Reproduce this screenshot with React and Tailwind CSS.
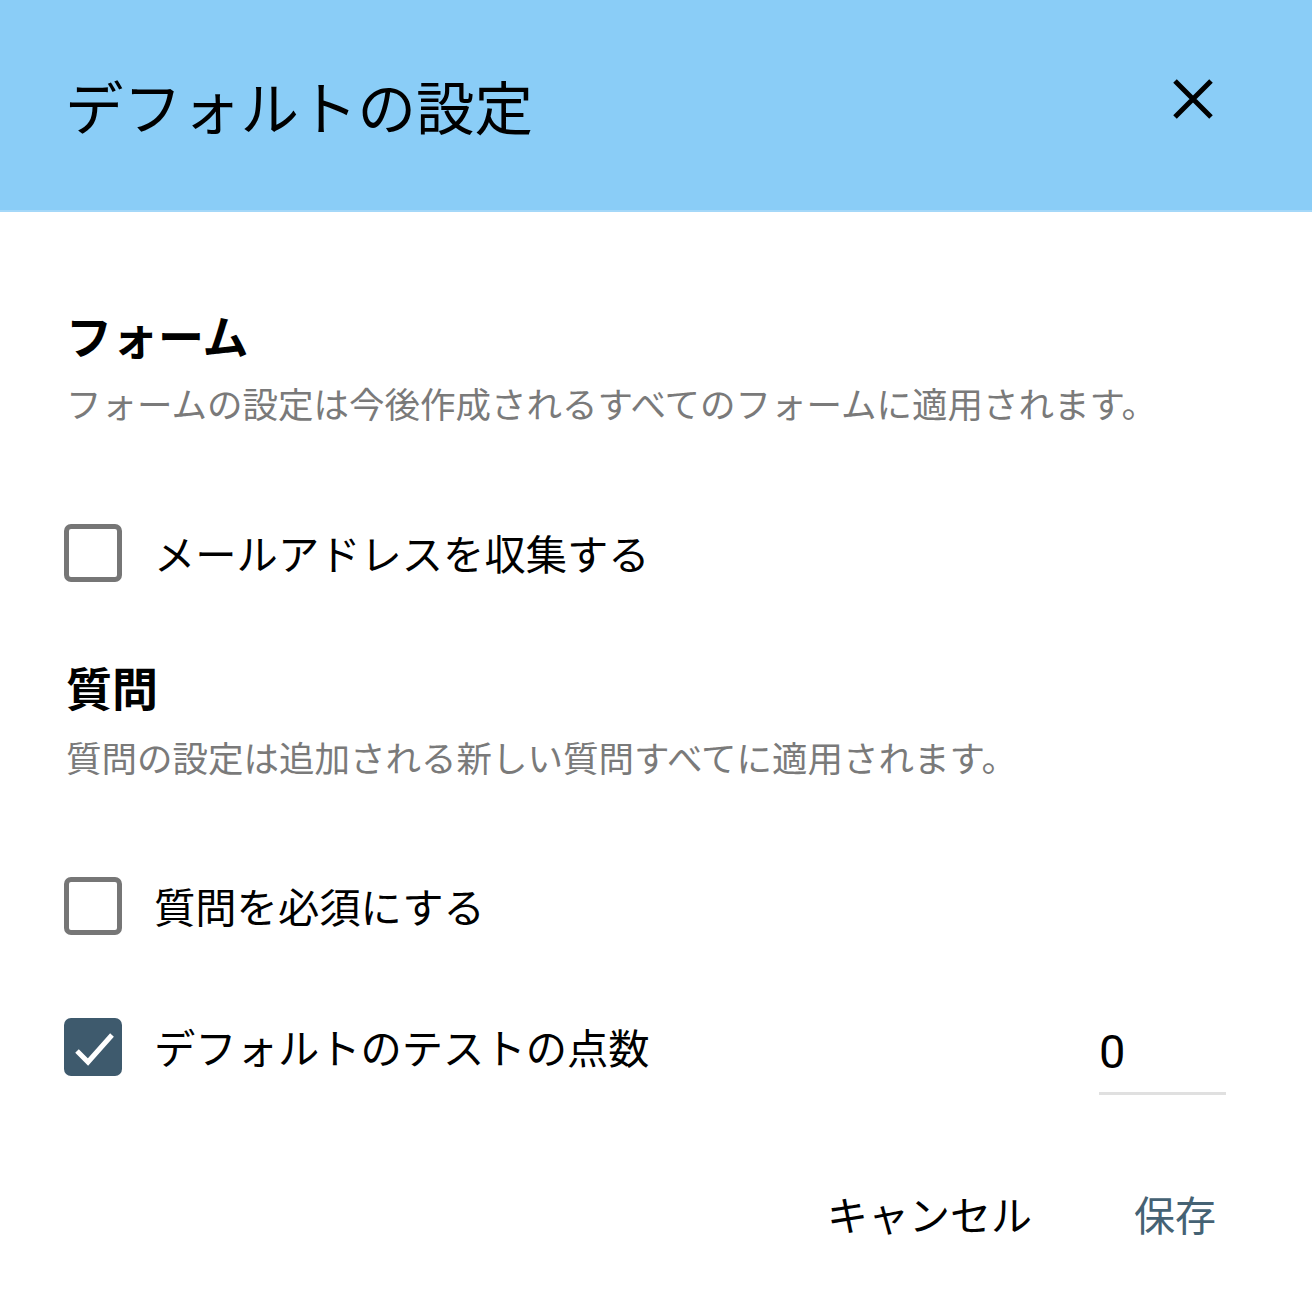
function Box({ checked }) {
  if (checked) {
    return (
      <span className="flex h-[58px] w-[58px] shrink-0 items-center justify-center rounded-[7px] bg-[#3e5a6d]">
        <svg viewBox="0 0 58 58" className="h-[58px] w-[58px]">
          <path d="M13 33 L24 44 L48 17" fill="none" stroke="white" strokeWidth="5" />
        </svg>
      </span>
    )
  }
  return <span className="h-[58px] w-[58px] shrink-0 rounded-[7px] border-[5px] border-[#767676] bg-white" />
}

export default function App() {
  return (
    <div
      className="min-h-[1314px] w-full bg-white text-black"
      style={{ fontFamily: '"Noto Sans CJK JP", "Noto Sans", sans-serif' }}
    >
      {/* Header */}
      <div className="flex h-[212px] items-center justify-between border-b-2 border-[#a4d8f9] bg-[#8acdf7] pl-[65px] pr-[99px]">
        <h1 className="text-[58.5px] leading-none font-normal">デフォルトの設定</h1>
        <svg viewBox="0 0 40 40" className="h-[40px] w-[40px] -translate-y-[6px]">
          <path d="M2 2 L38 38 M38 2 L2 38" stroke="black" strokeWidth="5" fill="none" />
        </svg>
      </div>

      <div className="px-[64px]">
        {/* Form section */}
        <h2 className="mt-[94px] pl-[2px] text-[46px] leading-[56px] font-bold">フォーム</h2>
        <p className="mt-[19px] pl-[2px] text-[35.5px] leading-[44px] text-[#7a7a7a]">
          フォームの設定は今後作成されるすべてのフォームに適用されます。
        </p>

        <label className="mt-[99px] flex items-center gap-[32px]">
          <Box />
          <span className="text-[41.3px] leading-none">メールアドレスを収集する</span>
        </label>

        {/* Question section */}
        <h2 className="mt-[76px] pl-[2px] text-[46px] leading-[56px] font-bold">質問</h2>
        <p className="mt-[21px] pl-[2px] text-[35.5px] leading-[44px] text-[#7a7a7a]">
          質問の設定は追加される新しい質問すべてに適用されます。
        </p>

        <label className="mt-[98px] flex items-center gap-[32px]">
          <Box />
          <span className="text-[41.3px] leading-none">質問を必須にする</span>
        </label>

        <div className="mt-[83px] flex items-start justify-between pr-[22px]">
          <label className="flex items-center gap-[32px]">
            <Box checked />
            <span className="text-[41.3px] leading-none">デフォルトのテストの点数</span>
          </label>
          <div className="mt-[8px] w-[127px] border-b-[3px] border-[#e0e0e0] pb-[14px]">
            <span className="block text-[47px] leading-[52px]" style={{ fontFamily: 'Roboto, sans-serif' }}>0</span>
          </div>
        </div>

        {/* Actions */}
        <div className="mt-[98px] flex items-center justify-end gap-[102px] pr-[32px]">
          <button className="text-[41px] leading-none">キャンセル</button>
          <button className="text-[41px] leading-none text-[#456274]">保存</button>
        </div>
      </div>
    </div>
  )
}
